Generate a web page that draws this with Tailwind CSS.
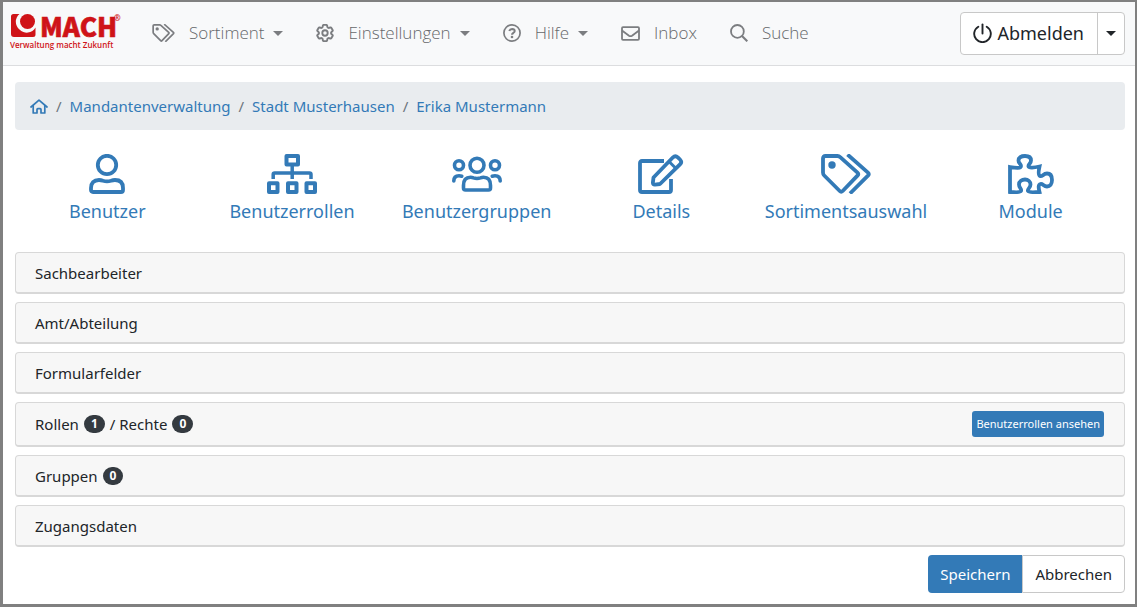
<!DOCTYPE html>
<html lang="de">
<head>
<meta charset="utf-8">
<meta name="viewport" content="width=device-width, initial-scale=1">
<title>Erika Mustermann – Mandantenverwaltung</title>
<script src="https://cdn.jsdelivr.net/npm/@tailwindcss/browser@4"></script>
</head>
<body class="flex min-h-screen flex-col border-t-2 border-r-2 border-b-3 border-l-3 border-[#808080] bg-white font-['Noto_Sans',sans-serif] text-[15px] leading-6 text-[#212529]">

<svg class="hidden" aria-hidden="true">
  <symbol id="tags" viewBox="0 0 50 40">
    <g fill="none" stroke="currentColor" stroke-width="3.8" stroke-linecap="round" stroke-linejoin="round">
      <path d="M2 4.5Q2 2 4.5 2H16.5Q18 2 19.2 3.2L36.5 18.7Q38 20 36.7 21.4L21.7 37Q20.200 38.500 18.700 37L3.200 21.500Q2 20.300 2 18.500Z"/>
      <path stroke-linecap="butt" d="M26.500 0.500L47 18.700Q48.500 20 47.200 21.400L29 39.500"/>
    </g>
    <circle cx="11" cy="11" r="3.700" fill="currentColor"/>
  </symbol>
</svg>

<header class="flex h-16 items-center border-b border-[#dcdddf] bg-[#f8f9fa] pr-[10px] pb-px pl-[7px]">
  <a href="#" class="block shrink-0" aria-label="MACH – Verwaltung macht Zukunft">
    <svg class="block h-10 w-[112px] overflow-visible" viewBox="0 0 112 40" fill="#cf1318">
      <path fill-rule="evenodd" d="M1 3.500Q1 1 3.500 1H9.500A10 10 0 0 0 9.500 16.500A10 10 0 0 0 25.500 14.500V21.500Q25.500 24 23 24H4Q1 24 1 21Z"/>
      <circle cx="17.500" cy="8.500" r="7.500"/>
      <text x="30" y="24" font-family="'Noto Sans CJK JP',sans-serif" font-weight="900" font-size="26" stroke="#cf1318" stroke-width="0.600">MACH</text>
      <text x="104" y="8" font-family="'Open Sans',sans-serif" font-weight="700" font-size="8">®</text>
      <text x="0" y="35" font-family="'Open Sans',sans-serif" font-weight="600" font-size="8">Verwaltung macht Zukunft</text>
    </svg>
  </a>
  <nav class="ml-[30px] flex items-center gap-[33px] font-['Open_Sans',sans-serif] text-[17px] font-light text-[#66686b]">
    <a href="#" class="flex items-center">
      <svg class="h-[18px] w-[23px] text-[#7b7d80]" aria-hidden="true"><use href="#tags"/></svg>
      <span class="ml-[14px]">Sortiment</span>
      <svg class="ml-[9px] h-[5px] w-[10px] text-[#7b7d80]" viewBox="0 0 10 5" fill="currentColor"><path d="M0 0H10L5 5Z"/></svg>
    </a>
    <a href="#" class="flex items-center">
      <svg class="size-[18px] text-[#7b7d80]" viewBox="2 2 20 20" fill="none" stroke="currentColor" stroke-width="2.100"><path d="M9.594 3.940c.09-.542.56-.94 1.110-.94h2.593c.55 0 1.020.398 1.110.94l.213 1.281c.063.374.313.686.645.87.074.04.147.083.22.127.325.196.72.257 1.075.124l1.217-.456a1.125 1.125 0 0 1 1.370.49l1.296 2.247a1.125 1.125 0 0 1-.26 1.431l-1.003.827c-.293.241-.438.613-.43.992a7.723 7.723 0 0 1 0 .255c-.008.378.137.75.43.991l1.004.827c.424.35.534.955.26 1.430l-1.298 2.247a1.125 1.125 0 0 1-1.369.491l-1.217-.456c-.355-.133-.75-.072-1.076.124a6.470 6.470 0 0 1-.22.128c-.331.183-.581.495-.644.869l-.213 1.281c-.09.543-.56.94-1.110.94h-2.594c-.55 0-1.019-.398-1.110-.94l-.213-1.281c-.062-.374-.312-.686-.644-.87a6.520 6.520 0 0 1-.22-.127c-.325-.196-.72-.257-1.076-.124l-1.217.456a1.125 1.125 0 0 1-1.369-.49l-1.297-2.247a1.125 1.125 0 0 1 .26-1.431l1.004-.827c.292-.24.437-.613.43-.991a6.932 6.932 0 0 1 0-.255c.007-.38-.138-.751-.43-.992l-1.004-.827a1.125 1.125 0 0 1-.26-1.430l1.297-2.247a1.125 1.125 0 0 1 1.370-.491l1.216.456c.356.133.751.072 1.076-.124.072-.044.146-.086.22-.128.332-.183.582-.495.644-.869l.214-1.280Z"/><circle cx="12" cy="12" r="3"/></svg>
      <span class="ml-[14px]">Einstellungen</span>
      <svg class="ml-[9px] h-[5px] w-[10px] text-[#7b7d80]" viewBox="0 0 10 5" fill="currentColor"><path d="M0 0H10L5 5Z"/></svg>
    </a>
    <a href="#" class="flex items-center">
      <svg class="size-[18px] text-[#7b7d80]" viewBox="0 0 18 18" fill="none" stroke="currentColor"><circle cx="9" cy="9" r="8.100" stroke-width="1.700"/><path d="M6.300 7Q7 4.900 9.100 4.900Q11.700 5 11.700 7Q11.700 8.200 10.300 9Q9 9.700 9 10.700" stroke-width="2"/><circle cx="9" cy="13" r="1.300" fill="currentColor" stroke="none"/></svg>
      <span class="ml-[14px]">Hilfe</span>
      <svg class="ml-[9px] h-[5px] w-[10px] text-[#7b7d80]" viewBox="0 0 10 5" fill="currentColor"><path d="M0 0H10L5 5Z"/></svg>
    </a>
    <a href="#" class="flex items-center">
      <svg class="h-[15px] w-[19px] text-[#7b7d80]" viewBox="0 0 19 15" fill="none" stroke="currentColor" stroke-width="1.800" stroke-linejoin="round"><rect x="1" y="1.200" width="17" height="12.600" rx="1"/><path d="M1 4.500L8 9.700Q9.500 10.700 11 9.700L18 4.500"/></svg>
      <span class="ml-[14px]">Inbox</span>
    </a>
    <a href="#" class="flex items-center">
      <svg class="size-[18px] text-[#7b7d80]" viewBox="0 0 18 18" fill="none" stroke="currentColor" stroke-width="1.800"><circle cx="7.400" cy="7.400" r="6.400"/><path d="M12 12L17.300 17.300" stroke-width="2.100"/></svg>
      <span class="ml-[14px]">Suche</span>
    </a>
  </nav>
  <div class="ml-auto flex h-[43px] rounded border border-[#c8c8c8] bg-white">
    <button type="button" class="flex items-center gap-[5px] border-r border-[#c8c8c8] px-[13px] pl-3 text-lg">
      <svg class="h-[20px] w-[19px]" viewBox="0 0 19 20" fill="none" stroke="currentColor" stroke-width="1.900" stroke-linecap="round"><path d="M9.500 1.500V10.500"/><path d="M5.300 3.700A8.300 8.300 0 1 0 13.700 3.700"/></svg>
      Abmelden
    </button>
    <button type="button" class="flex w-[26px] items-center justify-center" aria-label="Weitere Optionen">
      <svg class="h-[5px] w-[10px]" viewBox="0 0 10 5" fill="currentColor"><path d="M0 0H10L5 5Z"/></svg>
    </button>
  </div>
</header>

<main class="px-3 pt-4 pr-[10px] pb-2">
  <nav aria-label="Brotkrumen" class="rounded bg-[#e9ecef] px-[15px] py-3">
    <ol class="flex items-center gap-2 text-[#337ab7]">
      <li><a href="#" aria-label="Startseite"><svg class="h-[15px] w-[18px]" viewBox="0 0 18 15" fill="none" stroke="currentColor" stroke-width="1.700" stroke-linejoin="round" stroke-linecap="round"><path d="M1 8L9 1.200L17 8"/><path d="M3.200 6.500V14H7V10.500Q7 9.700 7.800 9.700H10.200Q11 9.700 11 10.500V14H14.800V6.500"/></svg></a></li>
      <li class="text-[#6c757d]" aria-hidden="true">/</li>
      <li><a href="#">Mandantenverwaltung</a></li>
      <li class="text-[#6c757d]" aria-hidden="true">/</li>
      <li><a href="#">Stadt Musterhausen</a></li>
      <li class="text-[#6c757d]" aria-hidden="true">/</li>
      <li><a href="#">Erika Mustermann</a></li>
    </ol>
  </nav>

  <nav aria-label="Bereiche" class="mt-6 grid grid-cols-6 pr-[2px] text-lg leading-[30px] text-[#337ab7]">
    <a href="#" class="flex flex-col items-center gap-[2px]">
      <svg class="h-10 w-9" viewBox="0 0 36 40" fill="none" stroke="currentColor" stroke-width="3.800"><circle cx="18" cy="11" r="9.200"/><path d="M2 34Q2 26 10 26Q12 26 14 26.800Q18 28 22 26.800Q24 26 26 26Q34 26 34 34V36Q34 38 32 38H4Q2 38 2 36Z"/></svg>
      Benutzer
    </a>
    <a href="#" class="flex flex-col items-center gap-[2px]">
      <svg class="h-10 w-[50px]" viewBox="0 0 50 40" fill="none" stroke="currentColor" stroke-width="4" stroke-linejoin="round"><rect x="19.500" y="2" width="11.500" height="8.500"/><path d="M25.200 12V25M6.200 25V20.500Q6.200 19 7.700 19H42.500Q44 19 44 20.500V25" stroke-width="3.500"/><rect x="2" y="29.200" width="8.500" height="8.800"/><rect x="21" y="29.200" width="8.500" height="8.800"/><rect x="39.500" y="29.200" width="8.500" height="8.800"/></svg>
      Benutzerrollen
    </a>
    <a href="#" class="flex flex-col items-center gap-[2px]">
      <svg class="h-10 w-[50px]" viewBox="0 -2.500 50 40" fill="none" stroke="currentColor" stroke-width="3.600"><circle cx="25" cy="8.700" r="7"/><circle cx="7" cy="8.700" r="4.500"/><circle cx="43" cy="8.700" r="4.500"/><path d="M11.500 29Q11.500 20.800 18.500 20.800Q20 20.800 21.500 21.400Q25 22.500 28.500 21.400Q30 20.800 31.500 20.800Q38.500 20.800 38.500 29V31.500Q38.500 33.500 36.500 33.500H13.500Q11.500 33.500 11.500 31.500Z"/><path stroke-linecap="round" d="M1.800 24.500Q1.800 19.200 7 19.200Q8.500 19.200 9.800 19.700M48.200 24.500Q48.200 19.200 43 19.200Q41.500 19.200 40.200 19.700"/></svg>
      Benutzergruppen
    </a>
    <a href="#" class="flex flex-col items-center gap-[2px]">
      <svg class="h-10 w-[46px]" viewBox="0 0 46 40" fill="none" stroke="currentColor" stroke-width="3.800" stroke-linejoin="round"><path d="M26 7H4Q2 7 2 9V36Q2 38 4 38H31Q33 38 33 36V25"/><path d="M15.500 23.500L34.800 3.500Q37.300 1 39.800 3.300L42 5.500Q44.400 8 42 10.400L22 30L17 30.600Q14.700 30.800 14.900 28.500Z"/><path d="M31 7.500L38 14.500" stroke-width="3"/></svg>
      Details
    </a>
    <a href="#" class="flex flex-col items-center gap-[2px]">
      <svg class="h-10 w-[50px]" aria-hidden="true"><use href="#tags"/></svg>
      Sortimentsauswahl
    </a>
    <a href="#" class="flex flex-col items-center gap-[2px]">
      <svg class="h-10 w-[46px]" viewBox="0 0 46 40" fill="none" stroke="currentColor" stroke-width="3.800"><path d="M2 13C8 14 13 14.500 13 12C13 10 10.500 9.500 10.500 6.500C10.500 3.500 13 2 17 2S23 3.800 23 6.500C23 9.500 20 10 20.500 12.500C21 14.500 27 13.500 31.500 12.500C30.500 17 30 21 32 22C34.500 23 35 19.500 39 19.500C42.500 19.500 44 22 44 26S42 32.500 39 32.500C35.500 32.500 35 29.500 32.500 30C30 30.500 30.500 34 31.500 38C27 38.300 21 38.500 20 37C19 35 22.500 34 22.500 30.500C22.500 27.500 20 25.500 17 25.500S11 27 11 30.500C11 34 14 35 13 37C12 38.500 6 38.300 2 38Z"/></svg>
      Module
    </a>
  </nav>

  <div class="mt-[26px] flex flex-col gap-2">
    <section class="rounded border border-b-2 border-[#d8d8d8] bg-[#f7f7f7]">
      <h2><button type="button" class="flex h-[39px] w-full items-center px-[19px] text-left">Sachbearbeiter</button></h2>
    </section>
    <section class="rounded border border-b-2 border-[#d8d8d8] bg-[#f7f7f7]">
      <h2><button type="button" class="flex h-[39px] w-full items-center px-[19px] text-left">Amt/Abteilung</button></h2>
    </section>
    <section class="rounded border border-b-2 border-[#d8d8d8] bg-[#f7f7f7]">
      <h2><button type="button" class="flex h-[39px] w-full items-center px-[19px] text-left">Formularfelder</button></h2>
    </section>
    <section class="flex items-center rounded border border-b-2 border-[#d8d8d8] bg-[#f7f7f7] pr-5">
      <h2 class="grow"><button type="button" class="flex h-[42px] w-full items-center gap-[5px] px-[19px] text-left">Rollen <span class="rounded-full bg-[#343a40] px-[7px] text-xs leading-[18px] font-bold text-white">1</span> / Rechte <span class="rounded-full bg-[#343a40] px-[7px] text-xs leading-[18px] font-bold text-white">0</span></button></h2>
      <button type="button" class="h-[26px] rounded-[3px] bg-[#337ab7] px-1 text-[11px] leading-4 text-white">Benutzerrollen ansehen</button>
    </section>
    <section class="rounded border border-b-2 border-[#d8d8d8] bg-[#f7f7f7]">
      <h2><button type="button" class="flex h-[39px] w-full items-center gap-[5px] px-[19px] text-left">Gruppen <span class="rounded-full bg-[#343a40] px-[7px] text-xs leading-[18px] font-bold text-white">0</span></button></h2>
    </section>
    <section class="rounded border border-b-2 border-[#d8d8d8] bg-[#f7f7f7]">
      <h2><button type="button" class="flex h-[39px] w-full items-center px-[19px] text-left">Zugangsdaten</button></h2>
    </section>
  </div>

  <div class="mt-2 flex justify-end">
    <button type="button" class="h-[38px] rounded-l bg-[#337ab7] px-3 text-white">Speichern</button>
    <button type="button" class="h-[38px] rounded-r border border-[#c8c8c8] bg-white px-3">Abbrechen</button>
  </div>
</main>
</body>
</html>
